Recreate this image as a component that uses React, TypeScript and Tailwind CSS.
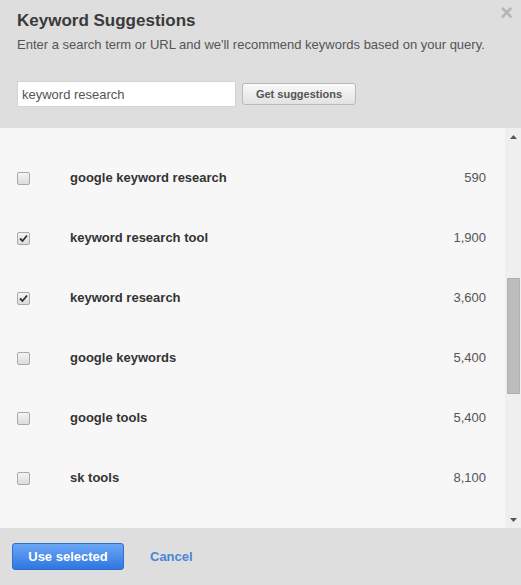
const rows = [
  { term: "google keyword research", volume: "590", checked: false },
  { term: "keyword research tool", volume: "1,900", checked: true },
  { term: "keyword research", volume: "3,600", checked: true },
  { term: "google keywords", volume: "5,400", checked: false },
  { term: "google tools", volume: "5,400", checked: false },
  { term: "sk tools", volume: "8,100", checked: false },
];

function Checkbox({ checked }: { checked: boolean }) {
  return (
    <div className="w-[13px] h-[13px] rounded-[2px] border border-[#a9a9a9] bg-gradient-to-b from-[#f4f4f4] to-[#dcdcdc] flex items-center justify-center">
      {checked && (
        <svg width="9" height="9" viewBox="0 0 9 9">
          <path d="M1 4.5 L3.5 7 L8 1.5" fill="none" stroke="#333" strokeWidth="1.8" />
        </svg>
      )}
    </div>
  );
}

export default function App() {
  return (
    <div className="w-[521px] h-[585px] flex flex-col font-['Liberation_Sans',Arial,sans-serif] text-[#333] overflow-hidden">
      <div className="relative h-[128px] bg-[#dedede] px-[17px] pt-[10px]">
        <div className="text-[17px] font-bold leading-[22px] text-[#3a3a3a]">Keyword Suggestions</div>
        <div className="mt-[3px] text-[13px] leading-[20px] text-[#555]">
          Enter a search term or URL and we'll recommend keywords based on your query.
        </div>
        <div className="mt-[26px] flex items-center gap-[6px]">
          <input
            defaultValue="keyword research"
            className="w-[219px] h-[26px] bg-white border border-[#d4d4d4] px-[4px] text-[13px] text-[#555] outline-none"
          />
          <button className="h-[22px] w-[114px] rounded-[3px] border border-[#b9b9b9] bg-gradient-to-b from-[#fafafa] to-[#e2e2e2] text-[11px] font-bold text-[#555]">
            Get suggestions
          </button>
        </div>
        <div className="absolute right-[8px] top-[2px] text-[22px] font-bold text-[#b4b4b4] leading-none">×</div>
      </div>

      <div className="h-[400px] flex bg-[#f7f7f7]">
        <div className="flex-1 overflow-hidden pt-[20px]">
          {rows.map((r) => (
            <div key={r.term} className="h-[60px] flex items-center pl-[17px] pr-[19px]">
              <Checkbox checked={r.checked} />
              <div className="ml-[40px] flex-1 text-[13px] font-bold text-[#333]">{r.term}</div>
              <div className="text-[13px] text-[#555]">{r.volume}</div>
            </div>
          ))}
        </div>
        <div className="w-[16px] bg-[#efefef] flex flex-col items-center">
          <div className="h-[17px] flex items-center justify-center">
            <svg width="7" height="4" viewBox="0 0 7 4">
              <path d="M0 4 L3.5 0 L7 4 Z" fill="#555" />
            </svg>
          </div>
          <div className="h-[133px]" />
          <div className="w-[13px] h-[116px] bg-[#bcbcbc] border border-[#b0b0b0]" />
          <div className="flex-1" />
          <div className="h-[17px] flex items-center justify-center">
            <svg width="7" height="4" viewBox="0 0 7 4">
              <path d="M0 0 L3.5 4 L7 0 Z" fill="#555" />
            </svg>
          </div>
        </div>
      </div>

      <div className="flex-1 bg-[#dedede] flex items-center px-[12px] gap-[26px]">
        <button className="w-[112px] h-[27px] rounded-[3px] border border-[#2f6fd0] bg-gradient-to-b from-[#6aa6f4] to-[#2f76e0] text-white text-[13px] font-bold">
          Use selected
        </button>
        <span className="text-[13px] font-bold text-[#4a86d8]">Cancel</span>
      </div>
    </div>
  );
}
